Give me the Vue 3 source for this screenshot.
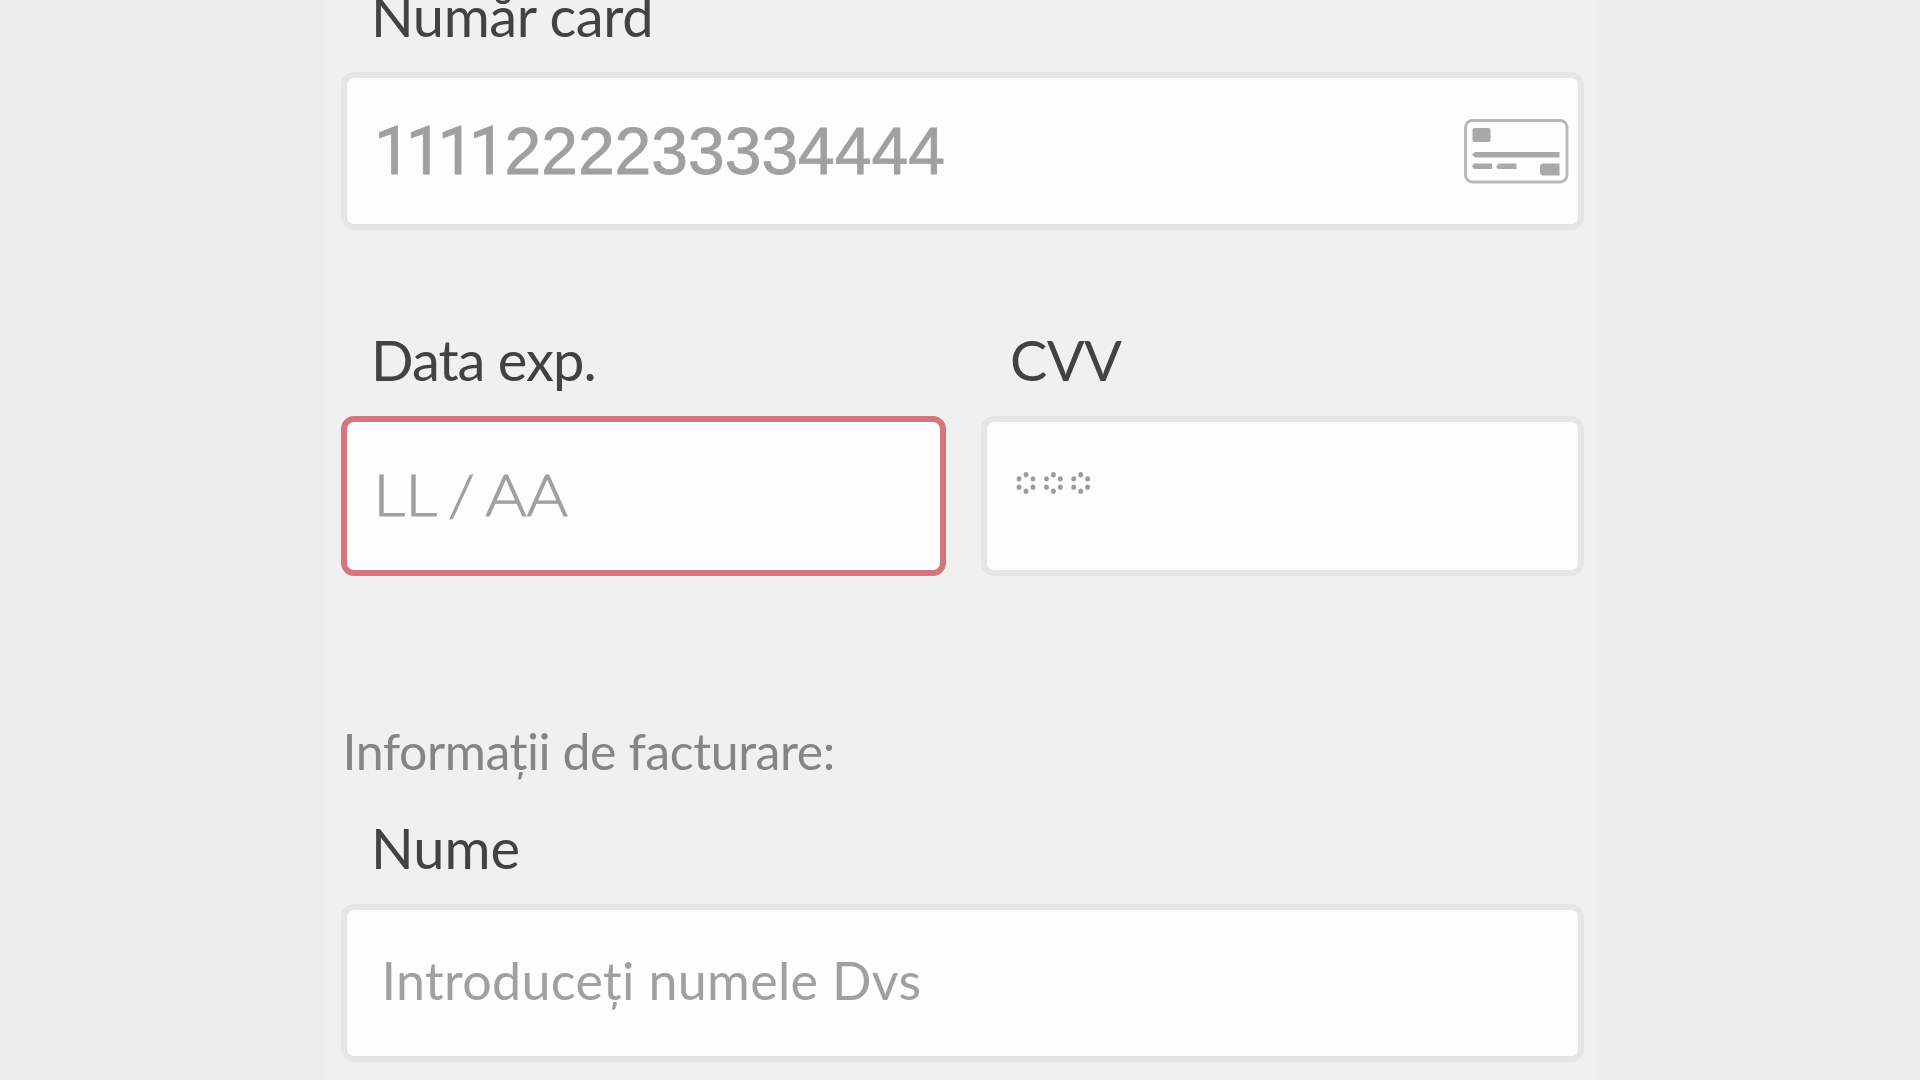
<script setup>
const dots = [0, 60, 120, 180, 240, 300].map((deg) => {
  const a = (deg * Math.PI) / 180
  return { x: Math.sin(a) * 8, y: Math.cos(a) * 8.3 }
})
const stars = [10, 37.4, 64.7]
</script>

<template>
  <main class="page">
    <form class="panel">
      <div class="group first">
        <label class="label"><span class="t-card">Număr card</span></label>
        <div class="field">
          <span class="number"><span class="ones">1111</span>222233334444</span>
          <svg class="card-icon" width="105" height="65" viewBox="0 0 105 65">
            <rect x="1.5" y="1.5" width="101.5" height="61.5" rx="7" fill="none" stroke="#b7b7b7" stroke-width="2.8" />
            <g fill="#a9a9a9">
              <rect x="8.5" y="9" width="18" height="14" rx="2" />
              <path d="M11 33H95.5V38.5H11L8 35.7Z" />
              <path d="M10 44.5H28V50H10L8 47.2Z" />
              <path d="M35 44.5H52.5V50H34L32 47.8Z" />
              <path d="M78 44.5H95.5V56.5H78L76 54.5V46.5Z" />
            </g>
          </svg>
        </div>
      </div>

      <div class="row">
        <div class="group expiry">
          <label class="label"><span class="t-data">Data exp.</span></label>
          <div class="field tall invalid"><span class="date">LL / AA</span></div>
        </div>
        <div class="group cvv">
          <label class="label"><span class="t-cvv">CVV</span></label>
          <div class="field tall">
            <svg class="mask" width="75" height="22" viewBox="0 0 75 22" role="img" aria-label="***">
              <g v-for="cx in stars" :key="cx" fill="#9c9c9c">
                <ellipse v-for="(d, i) in dots" :key="i" :cx="cx + d.x" :cy="11 + d.y" rx="2.4" ry="2.7" />
              </g>
            </svg>
          </div>
        </div>
      </div>

      <h2 class="section"><span>Informații de facturare:</span></h2>
      <div class="group name">
        <label class="label"><span class="t-name">Nume</span></label>
        <div class="field"><span class="hint">Introduceți numele Dvs</span></div>
      </div>
    </form>
  </main>
</template>

<style>
body {
  margin: 0;
  background: #eeeeee;
}
</style>

<style scoped>
.page {
  height: 1080px;
  overflow: hidden;
  display: flex;
  justify-content: center;
  background: #eeeeee;
  font-family: Lato, "Open Sans", sans-serif;
}
.panel {
  box-sizing: border-box;
  width: 1271px;
  height: 1080px;
  padding: 0 12px 0 16px;
  background: #f0f0f0;
  display: flex;
  flex-direction: column;
}
.group {
  display: flex;
  flex-direction: column;
  gap: 26px;
}
.first {
  margin-top: -14px;
}
.label {
  height: 60px;
  line-height: 60px;
  padding-left: 30.5px;
  font-size: 56px;
  color: #424244;
  white-space: nowrap;
}
.t-card {
  letter-spacing: -0.4px;
}
.t-data {
  letter-spacing: -0.95px;
}
.t-cvv {
  margin-left: -1px;
  letter-spacing: -0.6px;
}
.field {
  box-sizing: border-box;
  height: 158px;
  border: 6px solid #e5e5e5;
  border-radius: 13px;
  background: #fdfdfd;
  display: flex;
  align-items: center;
  justify-content: space-between;
  white-space: nowrap;
  color: #a0a0a0;
}
.tall {
  height: 160px;
}
.invalid {
  border-color: #d6747f;
}
.row {
  margin-top: 100px;
  display: flex;
  gap: 35px;
}
.expiry {
  width: 605px;
}
.cvv {
  flex: 1;
}
.number {
  padding-left: 27.5px;
  font-family: "Liberation Sans", Arial, sans-serif;
  font-size: 66px;
  line-height: 76px;
  -webkit-text-stroke: 0.8px #a0a0a0;
}
.ones {
  margin-right: 3.7px;
  font-family: Roboto, Arial, sans-serif;
  letter-spacing: -5.4px;
}
.card-icon {
  margin-right: 9px;
}
.date {
  padding-left: 24px;
  font-size: 58px;
  font-weight: 300;
  line-height: 70px;
  word-spacing: -4.5px;
  -webkit-text-stroke: 0.9px #a0a0a0;
  transform: translateY(-2px) scaleX(1.09);
  transform-origin: left center;
}
.mask {
  margin: -27px 0 0 29px;
}
.section {
  margin: 145px 0 0;
  padding-left: 2px;
  height: 60px;
  font-size: 50px;
  font-weight: 400;
  line-height: 60px;
  letter-spacing: -0.43px;
  color: #858585;
  white-space: nowrap;
}
.name {
  margin-top: 37px;
}
.hint {
  padding: 0 0 6px 35px;
  font-size: 52px;
  line-height: 60px;
  letter-spacing: 0.33px;
}
</style>
